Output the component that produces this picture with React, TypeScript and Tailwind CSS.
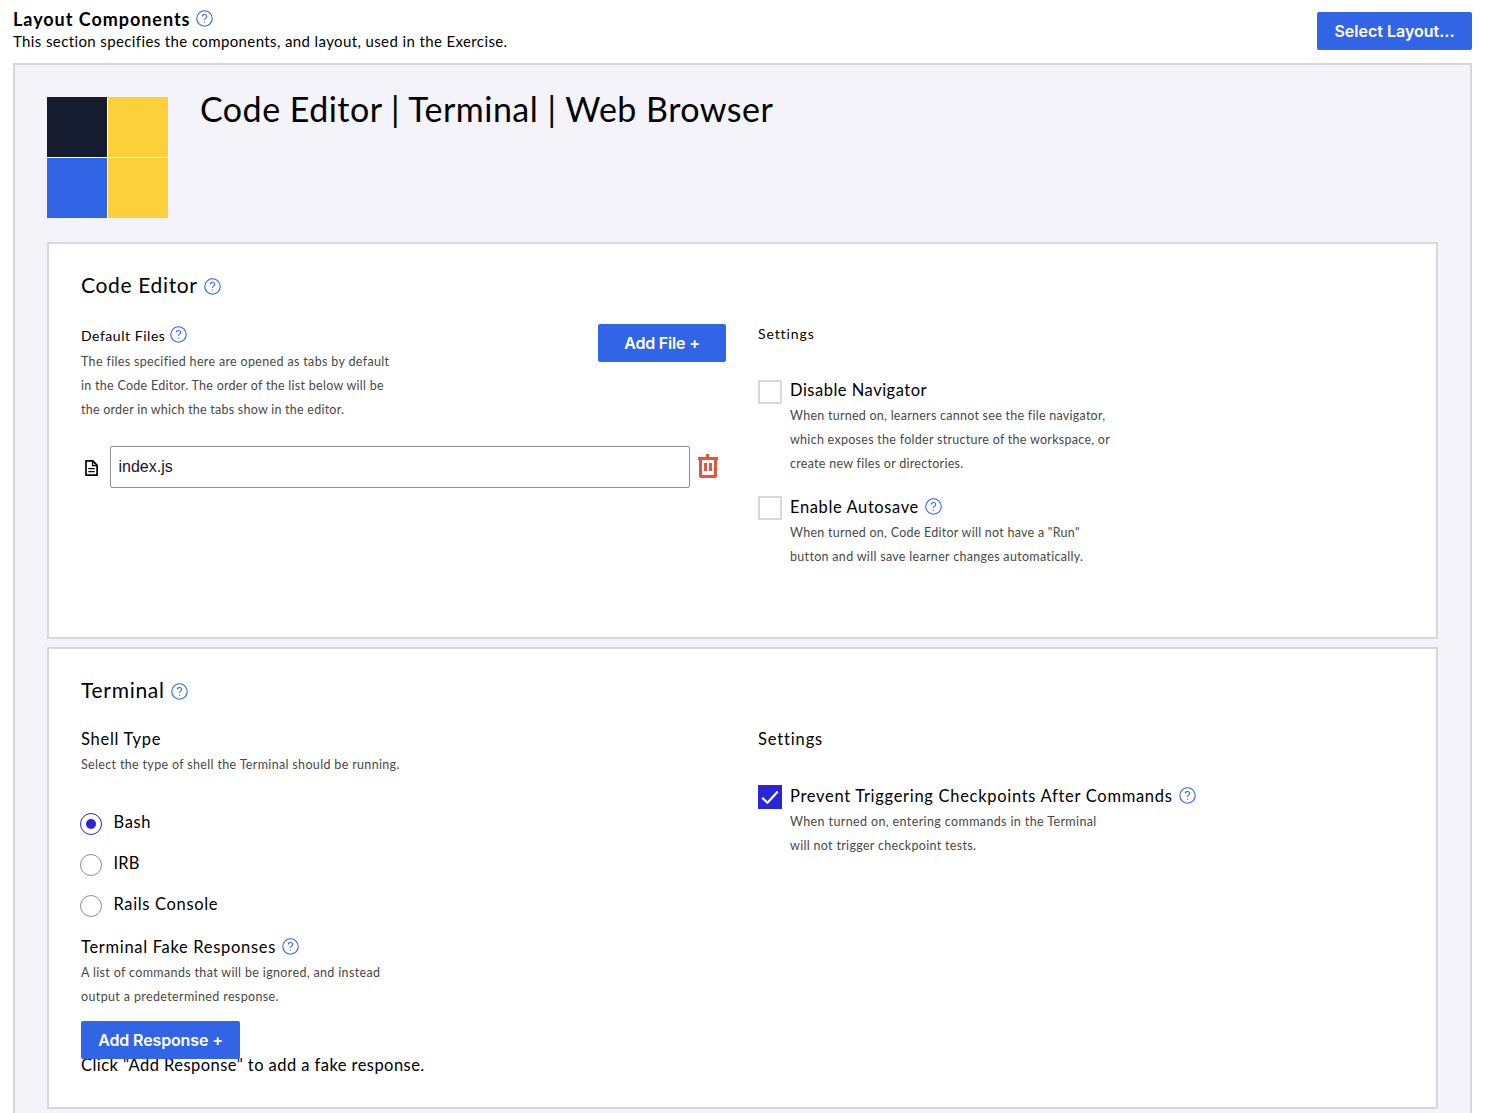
import type { ReactNode } from "react";

function HelpIcon({ className = "" }: { className?: string }) {
  return (
    <svg className={`h-[17px] w-[17px] shrink-0 ${className}`} viewBox="0 0 17 17" fill="none" stroke="#3264e6">
      <circle cx="8.5" cy="8.5" r="7.75" strokeWidth="1.1" />
      <path d="M6.3 6.500c0-1.300.9-2.100 2.200-2.100s2.200.8 2.200 2c0 1.600-2.200 1.800-2.200 3.600" strokeWidth="1.05" />
      <circle cx="8.5" cy="12.100" r=".7" fill="#3264e6" stroke="none" />
    </svg>
  );
}

function FileIcon() {
  return (
    <svg className="mt-0.5 h-4 w-[13px] shrink-0" viewBox="0 0 13 16" fill="none" stroke="#000" strokeWidth="1.7">
      <path d="M1 .9h6.8L12.1 5.400v9.700H1z" strokeLinejoin="round" />
      <path d="M7.600 1v4.600h4.400" strokeWidth="1.3" />
      <path d="M3.300 8.700h6.400M3.300 11.700h6.400" strokeWidth="1.3" />
    </svg>
  );
}

function TrashIcon() {
  return (
    <svg className="h-6 w-5 shrink-0" viewBox="0 0 20 24" fill="#e9533c">
      <path d="M8 0h3v3h9v3H0V3h8z" />
      <path fillRule="evenodd" d="M1 5h18v17a2 2 0 0 1-2 2H3a2 2 0 0 1-2-2zM4 6v15h12V6z" />
      <path d="M6 9h3v8H6zM11 9h3v8h-3z" />
    </svg>
  );
}

function Button({ children, className = "" }: { children: ReactNode; className?: string }) {
  return (
    <button
      className={`flex h-[38px] shrink-0 items-center justify-center whitespace-pre rounded-[2px] bg-[#3264e6] font-['Inter',sans-serif] text-base font-semibold text-white ${className}`}
    >
      {children}
    </button>
  );
}

function Description({ children, className = "" }: { children: ReactNode; className?: string }) {
  return (
    <div className={`flex flex-col whitespace-nowrap text-[12.5px] leading-6 text-[#484848] ${className}`}>
      {children}
    </div>
  );
}

function Label({ children, className = "" }: { children: ReactNode; className?: string }) {
  return <span className={`block whitespace-nowrap text-[16.5px] leading-6 ${className}`}>{children}</span>;
}

function Checkbox({ checked = false }: { checked?: boolean }) {
  return checked ? (
    <span className="mt-px flex h-6 w-6 shrink-0 items-center justify-center bg-[#2a25d8]">
      <svg className="h-6 w-6" viewBox="0 0 24 24" fill="none" stroke="#fff" strokeWidth="2.1">
        <path d="M4.200 12.700l5.300 5.100L19.800 6.500" />
      </svg>
    </span>
  ) : (
    <span className="mt-px h-6 w-6 shrink-0 border-2 border-[#d7d7dc] bg-white" />
  );
}

function Radio({ label, checked = false, className = "" }: { label: string; checked?: boolean; className?: string }) {
  return (
    <div className="-ml-px flex h-[41px] items-start">
      <span
        className={`mt-[3px] flex h-[22px] w-[22px] shrink-0 items-center justify-center rounded-full border ${
          checked ? "border-[#2a25d8]" : "border-[#8e8e92]"
        }`}
      >
        {checked && <span className="h-2.5 w-2.5 rounded-full bg-[#2a25d8]" />}
      </span>
      <Label className={`ml-[11.5px] ${className}`}>{label}</Label>
    </div>
  );
}

export default function App() {
  return (
    <div className="h-[1113px] overflow-hidden bg-white pl-[13px] pr-[14px] font-['Lato',sans-serif] text-black">
      <header className="flex h-[63px] items-start justify-between">
        <div className="pt-[6px]">
          <div className="flex h-6 items-center">
            <h1 className="-mb-0.5 whitespace-nowrap text-lg font-bold leading-[26px] tracking-[0.96px]">
              Layout Components
            </h1>
            <HelpIcon className="ml-[6px]" />
          </div>
          <p className="mt-px whitespace-nowrap text-[15px] leading-5 tracking-[0.385px]">
            This section specifies the components, and layout, used in the Exercise.
          </p>
        </div>
        <Button className="mt-3 w-[155px]">Select Layout...</Button>
      </header>

      <main className="h-[1100px] border-2 border-[#d7d7dc] bg-[#f4f3f9] px-8 pt-8">
        <div className="flex items-start gap-8">
          <div className="grid grid-cols-[60px_60px] grid-rows-[60px_60px] gap-px bg-white">
            <div className="bg-[#161c30]" />
            <div className="bg-[#fbd03b]" />
            <div className="bg-[#3264e6]" />
            <div className="bg-[#fbd03b]" />
          </div>
          <h2 className="-mt-2 whitespace-nowrap text-[34px] leading-10 tracking-[0.48px]">
            Code Editor | Terminal | Web Browser
          </h2>
        </div>

        <section className="mt-6 h-[397px] border-2 border-[#d7d7dc] bg-white px-8 pt-[29px]">
          <div className="flex h-6 items-center">
            <h3 className="whitespace-nowrap text-[21px] leading-6 tracking-[0.65px]">Code Editor</h3>
            <HelpIcon className="ml-[6px] mt-[3px]" />
          </div>
          <div className="mt-[27px] grid grid-cols-[645px_645px] gap-8">
            <div>
              <div className="flex items-start justify-between">
                <div>
                  <div className="flex h-6 items-center">
                    <span className="whitespace-nowrap text-sm leading-6 tracking-[0.54px]">Default Files</span>
                    <HelpIcon className="-mt-[3px] ml-[5px]" />
                  </div>
                  <Description className="mt-0.5">
                    <span className="tracking-[0.34px]">The files specified here are opened as tabs by default</span>
                    <span className="tracking-[0.28px]">in the Code Editor. The order of the list below will be</span>
                    <span className="tracking-[0.24px]">the order in which the tabs show in the editor.</span>
                  </Description>
                </div>
                <Button className="w-32 tracking-[-0.2px]">Add File +</Button>
              </div>
              <div className="mt-6 flex items-center pl-1">
                <FileIcon />
                <input
                  readOnly
                  value="index.js"
                  className="ml-3 h-[42px] w-[580px] rounded-[2px] border border-[#8e8e92] bg-white px-[7.5px] font-['Liberation_Sans',sans-serif] text-base text-[#10162f] outline-none"
                />
                <div className="-mt-0.5 ml-2">
                  <TrashIcon />
                </div>
              </div>
            </div>
            <div>
              <div className="-mt-0.5 whitespace-nowrap text-sm leading-6 tracking-[0.9px]">Settings</div>
              <div className="mt-8 flex items-start gap-2">
                <div className="flex pt-px">
                  <Checkbox />
                </div>
                <div>
                  <Label className="tracking-[0.5px]">Disable Navigator</Label>
                  <Description className="mt-0.5">
                    <span className="tracking-[0.26px]">When turned on, learners cannot see the file navigator,</span>
                    <span className="tracking-[0.28px]">which exposes the folder structure of the workspace, or</span>
                    <span className="tracking-[0.28px]">create new files or directories.</span>
                  </Description>
                </div>
              </div>
              <div className="mt-[19px] flex items-start gap-2">
                <Checkbox />
                <div>
                  <div className="flex h-6 items-center">
                    <Label className="tracking-[0.61px]">Enable Autosave</Label>
                    <HelpIcon className="-mt-px ml-[6px]" />
                  </div>
                  <Description className="mt-0.5">
                    <span className="tracking-[0.26px]">When turned on, Code Editor will not have a "Run"</span>
                    <span className="tracking-[0.31px]">button and will save learner changes automatically.</span>
                  </Description>
                </div>
              </div>
            </div>
          </div>
        </section>

        <section className="mt-2 h-[462px] border-2 border-[#d7d7dc] bg-white px-8 pt-[29px]">
          <div className="flex h-6 items-center">
            <h3 className="whitespace-nowrap text-[21px] leading-6 tracking-[0.7px]">Terminal</h3>
            <HelpIcon className="ml-[6px] mt-[3px]" />
          </div>
          <div className="mt-[25px] grid grid-cols-[645px_645px] gap-8">
            <div className="flex flex-col items-start">
              <Label className="tracking-[0.72px]">Shell Type</Label>
              <Description className="mt-0.5">
                <span className="tracking-[0.34px]">Select the type of shell the Terminal should be running.</span>
              </Description>
              <div className="mt-[33px]">
                <Radio label="Bash" checked className="tracking-[0.65px]" />
                <Radio label="IRB" className="tracking-[0.15px]" />
                <Radio label="Rails Console" className="tracking-[0.65px]" />
              </div>
              <div className="mt-[2px] flex h-6 items-center">
                <Label className="tracking-[0.69px]">Terminal Fake Responses</Label>
                <HelpIcon className="-mt-px ml-[6px]" />
              </div>
              <Description className="mt-0.5">
                <span className="tracking-[0.35px]">A list of commands that will be ignored, and instead</span>
                <span className="tracking-[0.37px]">output a predetermined response.</span>
              </Description>
              <Button className="relative z-10 mt-3 w-[159px] tracking-[-0.13px]">Add Response +</Button>
              <Label className="-mt-[6px] tracking-[0.44px]">Click "Add Response" to add a fake response.</Label>
            </div>
            <div>
              <Label className="tracking-[0.85px]">Settings</Label>
              <div className="mt-[33px] flex items-start gap-2">
                <Checkbox checked />
                <div>
                  <div className="flex h-6 items-center">
                    <Label className="tracking-[0.7px]">Prevent Triggering Checkpoints After Commands</Label>
                    <HelpIcon className="-mt-px ml-[6px]" />
                  </div>
                  <Description className="mt-0.5">
                    <span className="tracking-[0.38px]">When turned on, entering commands in the Terminal</span>
                    <span className="tracking-[0.32px]">will not trigger checkpoint tests.</span>
                  </Description>
                </div>
              </div>
            </div>
          </div>
        </section>
      </main>
    </div>
  );
}
